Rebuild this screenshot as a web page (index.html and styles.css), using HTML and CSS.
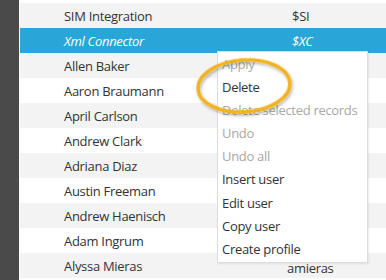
FILE: index.html
```html
<!DOCTYPE html>
<html lang="en">
<head>
    <meta charset="UTF-8">
    <title>Users</title>
    <link rel="stylesheet" href="styles.css">
</head>
<body>
    <div class="layout">
        <div class="sidebar"></div>
        <div class="grid">
            <div class="row alt"><span class="name">SIM Integration</span><span class="code">$SI</span></div>
            <div class="row selected"><span class="name">Xml Connector</span><span class="code">$XC</span></div>
            <div class="row alt"><span class="name">Allen Baker</span></div>
            <div class="row"><span class="name">Aaron Braumann</span></div>
            <div class="row alt"><span class="name">April Carlson</span></div>
            <div class="row"><span class="name">Andrew Clark</span></div>
            <div class="row alt"><span class="name">Adriana Diaz</span></div>
            <div class="row"><span class="name">Austin Freeman</span></div>
            <div class="row alt"><span class="name">Andrew Haenisch</span></div>
            <div class="row"><span class="name">Adam Ingrum</span></div>
            <div class="row alt"><span class="name">Alyssa Mieras</span><span class="code code-last">amieras</span></div>
        </div>
    </div>

    <ul class="context-menu">
        <li class="disabled">Apply</li>
        <li>Delete</li>
        <li class="disabled">Delete selected records</li>
        <li class="disabled">Undo</li>
        <li class="disabled">Undo all</li>
        <li>Insert user</li>
        <li>Edit user</li>
        <li>Copy user</li>
        <li>Create profile</li>
    </ul>

    <svg class="highlight" width="110" height="70" viewBox="0 0 110 70">
        <defs>
            <filter id="soft" x="-20%" y="-20%" width="140%" height="150%">
                <feDropShadow dx="1" dy="2" stdDeviation="1.5" flood-color="#000" flood-opacity="0.3"/>
            </filter>
        </defs>
        <ellipse cx="54" cy="33" rx="46" ry="26" transform="rotate(-4 54 33)"
                 fill="none" stroke="#f2b322" stroke-width="3.5" filter="url(#soft)"/>
    </svg>
</body>
</html>
```

FILE: styles.css
```css
body {
    margin: 0;
    background-color: #fff;
    font-family: "Open Sans", "Noto Sans", sans-serif;
    font-size: 13px;
    letter-spacing: -0.3px;
    color: #333;
    width: 386px;
    height: 280px;
    overflow: hidden;
    position: relative;
}
.layout {
    display: flex;
    gap: 1px;
    height: 280px;
}
.sidebar {
    width: 19px;
    background-color: #4a4a4a;
}
.grid {
    flex: 1;
    padding-top: 3px;
}
.row {
    display: flex;
    align-items: center;
    height: 25px;
    background-color: #fff;
}
.row.alt {
    background-color: #f3f3f3;
}
.row.selected {
    background-color: #29a6d7;
    color: #fff;
    font-style: italic;
}
.name {
    width: 228px;
    padding-left: 44px;
}
.code-last {
    margin-left: -5px;
    padding-top: 5px;
}
.context-menu {
    position: absolute;
    left: 217px;
    top: 51px;
    width: 149px;
    height: 209px;
    margin: 0;
    padding: 1px 0 0 0;
    list-style: none;
    background-color: #fff;
    border: 1px solid #dcdcdc;
    box-shadow: 1px 1px 2px rgba(0, 0, 0, 0.08);
}
.context-menu li {
    height: 23.1px;
    line-height: 23px;
    padding-left: 4px;
    white-space: nowrap;
}
.context-menu li.disabled {
    color: #a8a8a8;
}
.highlight {
    position: absolute;
    left: 190px;
    top: 53px;
}
```
